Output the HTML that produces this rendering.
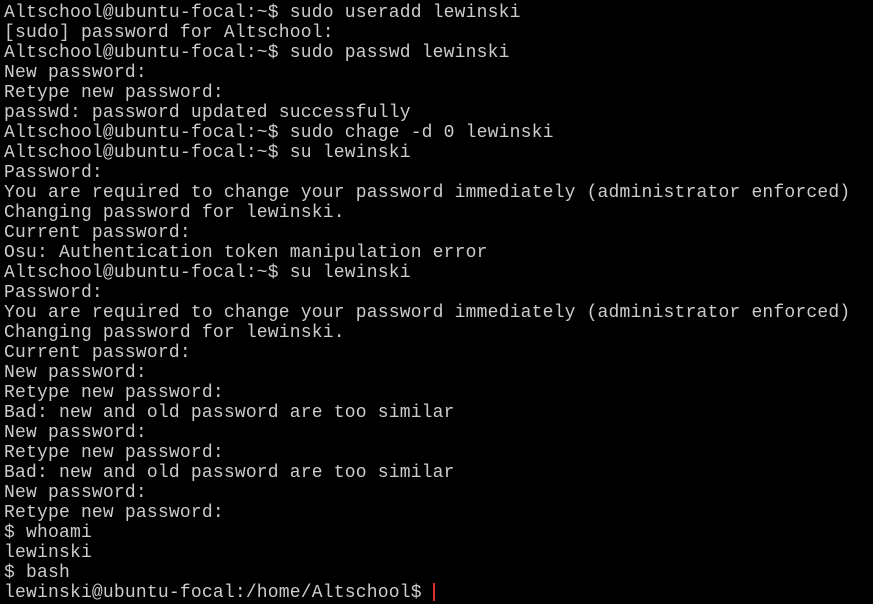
<!DOCTYPE html>
<html><head><meta charset="utf-8"><style>
html,body{margin:0;padding:0;background:#000;width:873px;height:604px;overflow:hidden}
pre{margin:0;position:absolute;left:4px;top:3px;font-family:"Liberation Mono",monospace;font-size:18px;line-height:20px;color:#cccccc;letter-spacing:0.19px}
.cur{position:absolute;left:433px;top:583px;width:2px;height:18px;background:#e03030}
</style></head><body>
<pre>Altschool@ubuntu-focal:~$ sudo useradd lewinski
[sudo] password for Altschool:
Altschool@ubuntu-focal:~$ sudo passwd lewinski
New password:
Retype new password:
passwd: password updated successfully
Altschool@ubuntu-focal:~$ sudo chage -d 0 lewinski
Altschool@ubuntu-focal:~$ su lewinski
Password:
You are required to change your password immediately (administrator enforced)
Changing password for lewinski.
Current password:
Osu: Authentication token manipulation error
Altschool@ubuntu-focal:~$ su lewinski
Password:
You are required to change your password immediately (administrator enforced)
Changing password for lewinski.
Current password:
New password:
Retype new password:
Bad: new and old password are too similar
New password:
Retype new password:
Bad: new and old password are too similar
New password:
Retype new password:
$ whoami
lewinski
$ bash
lewinski@ubuntu-focal:/home/Altschool$ </pre>
<div class="cur"></div>
</body></html>
